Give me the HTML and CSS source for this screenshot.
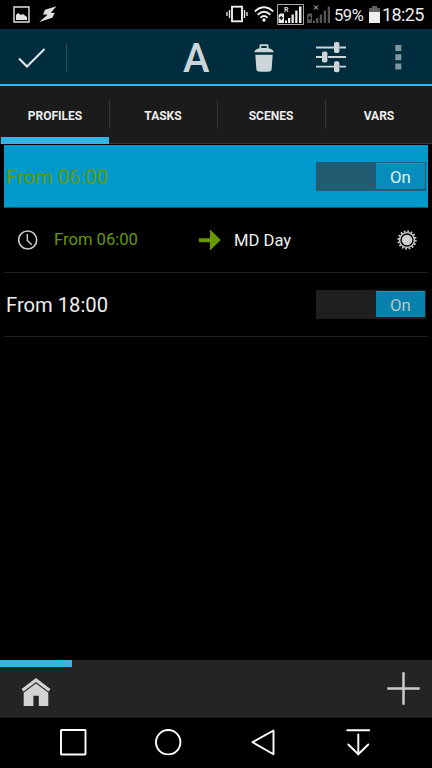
FILE: index.html
```html
<!DOCTYPE html>
<html lang="en">
<head>
<meta charset="utf-8">
<title>Profiles</title>
<link rel="stylesheet" href="styles.css">
</head>
<body>
<div class="screen">
  <header class="status">
    <svg class="picture" width="17" height="17" viewBox="0 0 17 17"><path d="M1 1h15v15H1z" fill="none" stroke="#e2e2e2" stroke-width="1.400"/><path d="M3 14V9l2-2 3 2 2-1 4 3v3z" fill="#e2e2e2"/></svg>
    <svg class="bolt" width="18" height="17" viewBox="0 0 18 17"><path d="M17.500.3 6 3.800 4 8.500l4.500.3L.3 16l13-4.300L15.800 7l-4-.3z" fill="#dedede"/></svg>
    <svg class="vibrate" width="22" height="18" viewBox="0 0 22 18"><rect x="6" y="1.700" width="10" height="14.600" fill="none" stroke="#ededed" stroke-width="1.900"/><path d="M3.500 5v8M18.500 5v8M1 7v4M21 7v4" stroke="#ededed" stroke-width="1.300"/></svg>
    <svg class="wifi" width="20" height="16" viewBox="0 0 20 16"><g fill="none" stroke="#ededed" stroke-width="1.900"><path d="M.8 5.500Q10-2.800 19.200 5.500M3.600 8.700Q10 2.800 16.400 8.700M6.500 11.800Q10 8.400 13.500 11.800"/></g><circle cx="10" cy="14" r="1.700" fill="#ededed"/></svg>
    <svg class="signal" width="27" height="21" viewBox="0 0 27 21"><path d="M.5.500h26v20H.500z" fill="none" stroke="#a8a8a8"/><text class="mini" x="7" y="7.700">R</text><path d="M1.500 11l1.700-1.500H7V19H1.500zM8 16.500h2V19H8zM11 14h2.300v5H11zM14.500 10.500h2.300V19h-2.300zM18.200 6.500h2.300V19h-2.300zM22 2.500h2.500V19H22z" fill="#ededed"/><path d="M4.200 12v4M2.500 14H6" stroke="#111" stroke-width="1.300"/></svg>
    <svg class="signal-off" width="25" height="21" viewBox="0 0 25 21"><path d="M8 1.500l4 4M12 1.500l-4 4" stroke="#ddd"/><path d="M1 11l1.700-1.500H6V19H1zM7 16.500h2V19H7zM10 14h2.300v5H10zM13.700 10.500h2.300V19h-2.300zM17.700 6.500H20V19h-2.300zM21.700 2.500H24V19h-2.300z" fill="#555"/><path d="M3.500 12.500v3M2 14h3" stroke="#000" stroke-width="1.300"/></svg>
    <span class="percent">59%</span>
    <svg class="battery" width="11" height="17" viewBox="0 0 11 17"><path d="M3 0h5v2h3v4H0V2h3z" fill="#606060"/><path d="M0 6h11v11H0z" fill="#ededed"/></svg>
    <span class="time">18:25</span>
  </header>

  <nav class="actions">
    <svg class="check" width="28" height="20" viewBox="0 0 28 20"><path d="M1 10.500l8 8L26.500 1" fill="none" stroke="#dfe5e7" stroke-width="2.100"/></svg>
    <i class="rule"></i>
    <span class="letter">A</span>
    <svg class="trash" width="20" height="28" viewBox="0 0 20 28"><path d="M.3 8.300Q.8 5 5.500 4.200V1.300Q5.500.3 6.500.3h7q1 0 1 1v2.900Q19.200 5 19.700 8.300zM7.300 2v1.900h5.400V2zM1.300 10.800h17.400L17.600 25.500Q17.400 27 15.500 27.400q-5.500.9-11 0Q2.600 27 2.400 25.500z" fill="#ccd5d8" fill-rule="evenodd"/></svg>
    <svg class="sliders" width="30" height="32" viewBox="0 0 30 32"><path d="M0 6.500h18M23.500 6.500H30M0 16h6M12 16h18M0 25.700h18M23.500 25.700H30" stroke="#ccd5d8" stroke-width="1.800"/><g fill="#ccd5d8"><rect x="18" y="1" width="5.400" height="11" rx="1.800"/><rect x="6" y="10.500" width="5.400" height="11" rx="1.800"/><rect x="18" y="20.200" width="5.400" height="11" rx="1.800"/></g></svg>
    <svg class="more" width="7" height="25" viewBox="0 0 7 25"><path d="M.3 0h6v6h-6zM.3 9.200h6v6h-6zM.3 18.400h6v6h-6z" fill="#80979f"/></svg>
  </nav>

  <nav class="tabs">
    <div class="tab selected">PROFILES</div>
    <div class="tab">TASKS</div>
    <div class="tab">SCENES</div>
    <div class="tab">VARS</div>
  </nav>

  <main class="list">
    <section class="profile active"><span class="name">From 06:00</span><div class="switch"><span class="thumb">On</span></div></section>
    <section class="detail">
      <svg class="clock" width="20" height="20" viewBox="0 0 20 20"><circle cx="9.700" cy="10" r="9" fill="none" stroke="#c9c9c9" stroke-width="1.600"/><path d="M9.300 4v6.500l4.500 4.300" fill="none" stroke="#c9c9c9" stroke-width="1.500"/></svg>
      <span class="context">From 06:00</span>
      <svg class="arrow" width="23" height="22" viewBox="0 0 23 22"><path d="M1 9.300h11V.5L22.800 11 12 21.500v-8.300H1z" fill="#669900"/></svg>
      <span class="task">MD Day</span>
      <svg class="sun" width="20" height="20" viewBox="0 0 20 20"><circle cx="10" cy="10" r="8.800" fill="none" stroke="#cfcfcf" stroke-width="1.800" stroke-dasharray="1.730 1.725"/><circle cx="10" cy="10" r="7.400" fill="none" stroke="#cfcfcf" stroke-width="1.400"/><circle cx="10" cy="10" r="5.300" fill="#cfcfcf"/></svg>
    </section>
    <section class="profile"><span class="name">From 18:00</span><div class="switch"><span class="thumb">On</span></div></section>
  </main>

  <footer class="projects">
    <div class="project">
      <svg class="home" width="30" height="28" viewBox="0 0 30 28"><path d="M2.700 14L15 4.500 27.300 14v14h-9.500V17.800h-5.400V28H2.700z" fill="#d3d3d3"/><path d="M1.500 14.500L15 4.600l13.500 9.900" fill="none" stroke="#333" stroke-width="1.600"/><path d="M1.500 12.300L15 2l13.500 10.300" fill="none" stroke="#d3d3d3" stroke-width="3.200"/></svg>
    </div>
    <svg class="plus" width="33" height="33" viewBox="0 0 33 33"><path d="M.3 16.500h32.400M16.500.3v32.400" stroke="#cbcbcb" stroke-width="2.500"/></svg>
  </footer>

  <nav class="system">
    <svg width="27" height="27" viewBox="0 0 27 27"><rect x="1" y="1" width="24.500" height="24.500" rx=".5"/></svg>
    <svg width="27" height="27" viewBox="0 0 27 27"><circle cx="13.200" cy="13.200" r="12.200"/></svg>
    <svg width="27" height="27" viewBox="0 0 27 27"><path d="M23.500 1.500v23.700L2.500 13.200z"/></svg>
    <svg width="27" height="27" viewBox="0 0 27 27"><path d="M2.200 1.300h22M13.300 5.500v20M3.300 15.500l10 9.800 10-9.800"/></svg>
  </nav>
</div>
</body>
</html>
```

FILE: styles.css
```css
* { box-sizing: border-box; }
body { margin: 0; background: #000; font-family: Roboto, "Liberation Sans", sans-serif; color: #fff; }
svg { display: block; flex: none; }
.screen { width: 432px; height: 768px; display: flex; flex-direction: column; overflow: hidden; }

.status { height: 29px; flex: none; display: flex; align-items: flex-start; color: #ededed; white-space: nowrap; }
.picture { margin: 6px 0 0 13px; }
.bolt { margin: 6px 0 0 9px; }
.vibrate { margin: 5px 0 0 169px; }
.wifi { margin: 6px 0 0 6px; }
.signal { margin: 4px 0 0 3px; }
.signal-off { margin: 4px 0 0 2px; }
.mini { font: bold 7px Roboto, sans-serif; fill: #ddd; }
.percent { width: 29px; margin: 6px 0 0 3px; font-size: 16.500px; line-height: 19px; letter-spacing: -.4px; }
.battery { margin: 6px 0 0 6px; }
.time { margin: 4px 0 0 2px; font-size: 18px; line-height: 22px; letter-spacing: -.6px; }

.actions { height: 57px; flex: none; display: flex; align-items: flex-start; background: #002d3d; border-bottom: 2px solid #33b5e5; }
.check { margin: 19px 0 0 18px; }
.rule { width: 1px; height: 29px; margin: 14px 0 0 20px; background: #264c5a; }
.letter { width: 28px; margin: 6px 0 0 116px; font-size: 40px; font-weight: 500; line-height: 47px; color: #ccd5d8; }
.trash { margin: 15px 0 0 43px; }
.sliders { margin: 12px 0 0 42px; }
.more { margin: 16px 0 0 49px; }

.tabs { height: 58px; flex: none; display: flex; background: #1b1b1b; border-top: 1px solid #17262c; border-bottom: 1px solid #3a3a3a; padding-left: 1px; margin-right: -1px; }
.tab { position: relative; flex: 1; padding-top: 21px; text-align: center; font-size: 12px; font-weight: 700; line-height: 16px; color: #eee; }
.tab + .tab::before { content: ""; position: absolute; left: 0; top: 13px; width: 1px; height: 29px; background: #343434; }
.selected { border-bottom: 7px solid #33b5e5; margin-bottom: -1px; }

.list { flex: 1; padding: 1px 4px 0; }
.profile { height: 64px; display: flex; align-items: center; justify-content: space-between; padding: 0 2px; border-bottom: 1px solid #222; }
.active { height: 63px; background: #0099cc; border-bottom: 1px solid #005975; }
.name { font-size: 20.200px; line-height: 24px; color: #eee; }
.active .name { margin-top: 2px; color: #669900; }
.switch { width: 110px; height: 29px; padding: 1px 1px 2px; display: flex; justify-content: flex-end; background: #1f1f1f; }
.thumb { width: 49px; height: 26px; border-radius: 1px; border-top: 1px solid #2491b5; background: #0782ad; text-align: center; font-size: 16.800px; line-height: 27px; color: #b9c5c9; }
.active .switch { background: #225c72; }
.active .thumb { background: #078dbb; border-color: #2798bd; color: #e3f2f7; }
.detail { height: 65px; display: flex; align-items: center; border-bottom: 1px solid #222; font-size: 16.600px; line-height: 20px; white-space: nowrap; }
.clock { margin-left: 14px; }
.context { width: 86px; margin-left: 16px; color: #669900; }
.arrow { margin-left: 58px; }
.task { width: 60px; margin: 1px 0 0 13px; color: #eee; }
.sun { margin-left: 103px; }

.projects { height: 58px; flex: none; display: flex; justify-content: space-between; background: #242424; border-bottom: 1px solid #151515; }
.project { width: 72px; border-top: 7px solid #33b5e5; }
.home { margin: 11px 0 0 21px; }
.plus { margin: 12px 12px 0 0; }

.system { height: 50px; flex: none; display: flex; gap: 68px; padding: 11px 0 0 60px; }
.system svg { fill: none; stroke: #fff; stroke-width: 1.900; stroke-linecap: round; stroke-linejoin: round; }
```
